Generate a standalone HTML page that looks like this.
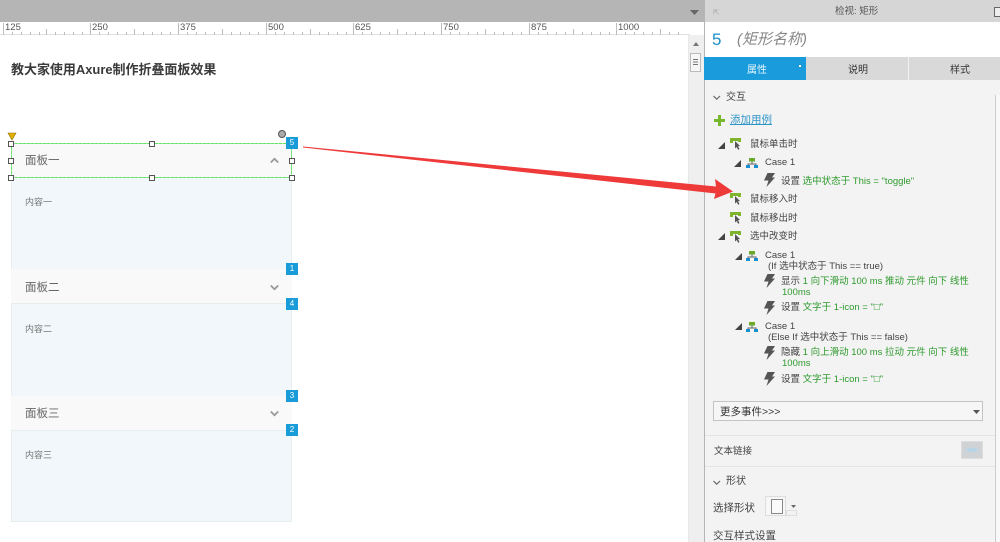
<!DOCTYPE html>
<html lang="zh">
<head>
<meta charset="utf-8">
<style>
html,body{margin:0;padding:0;background:#fff}
#p{position:relative;width:1000px;height:542px;overflow:hidden;background:#fff;font-family:"Liberation Sans","Noto Sans CJK SC",sans-serif;color:#444;filter:blur(.35px)}
#p div{position:absolute}
.t{position:absolute;white-space:nowrap;line-height:14px;font-size:9.5px;color:#444}
.g{color:#2e9a2e}
.b{background:#1a9cd8;color:#fff;width:12px;height:12px;font-size:8px;line-height:12px;text-align:center}
.h{width:4px;height:4px;border:1px solid #555;background:#fff}
.pn{left:11px;width:279px;border:1px solid #e6eeee;background:#f1f7fa}
.hd{left:11px;width:281px;height:35px;background:#f9f9f9;border-bottom:1px solid #e8eef0;box-sizing:border-box}
.sx{height:1px;left:11px;width:281px;background:repeating-linear-gradient(90deg,#66e266 0 3px,#a8eea8 3px 4px)}
.sy{width:1px;top:143px;height:35px;background:repeating-linear-gradient(180deg,#66e266 0 3px,#a8eea8 3px 4px)}
svg{position:absolute;overflow:visible}
</style>
</head>
<body>
<div id="p">
<svg width="0" height="0" style="position:absolute"><defs>
<g id="ev"><path d="M0 0h7v3H3v2H0z" fill="#7fb52c"/><path d="M7 0h4v4H8V3H7z" fill="#7fb52c"/><path d="M5 3l5 5-2 .3 1.500 2.700-1.400.7L6.700 9 5 10.500z" fill="#555"/></g>
<g id="cs"><rect x="3" y="0" width="6" height="3.500" fill="#6aa92a"/><path d="M6 3.500V6M2 9V6h8v3" fill="none" stroke="#666" stroke-width="1"/><rect x="0" y="7" width="4" height="3" fill="#1a8fd0"/><rect x="8" y="7" width="4" height="3" fill="#1a8fd0"/></g>
<g id="ac"><path d="M3.500 0H11L8 4.500h3L2.500 14 4.500 7.500H0z" fill="#555"/></g>
<g id="tr"><path d="M7 0v7H0z" fill="#444"/></g>
</defs></svg>

<!-- top bar + ruler -->
<div style="left:0;top:0;width:704px;height:22px;background:#b5b5b5"></div>
<div style="left:0;top:22px;width:690px;height:13px;background:#fff;border-bottom:1px solid #e2e2e2;box-sizing:border-box"></div>
<svg style="left:0;top:22px" width="690" height="13"><g stroke="#bdbdbd" stroke-width="1">
<path d="M3.500 1v12M90.500 1v12M178.500 1v12M266.500 1v12M353.500 1v12M441.500 1v12M529.500 1v12M616.500 1v12M46.500 7v6M134.500 7v6M222.500 7v6M310.500 7v6M397.500 7v6M485.500 7v6M573.500 7v6M660.500 7v6"/>
<path d="M12.500 10v3M21.500 10v3M30.500 10v3M39.500 10v3M55.500 10v3M64.500 10v3M73.500 10v3M82.500 10v3M99.500 10v3M108.500 10v3M117.500 10v3M126.500 10v3M143.500 10v3M152.500 10v3M161.500 10v3M170.500 10v3M187.500 10v3M196.500 10v3M205.500 10v3M214.500 10v3M231.500 10v3M240.500 10v3M249.500 10v3M258.500 10v3M275.500 10v3M284.500 10v3M293.500 10v3M302.500 10v3M319.500 10v3M328.500 10v3M337.500 10v3M346.500 10v3M362.500 10v3M371.500 10v3M380.500 10v3M389.500 10v3M406.500 10v3M415.500 10v3M424.500 10v3M433.500 10v3M450.500 10v3M459.500 10v3M468.500 10v3M477.500 10v3M494.500 10v3M503.500 10v3M512.500 10v3M521.500 10v3M538.500 10v3M547.500 10v3M556.500 10v3M565.500 10v3M582.500 10v3M591.500 10v3M600.500 10v3M609.500 10v3M625.500 10v3M634.500 10v3M643.500 10v3M652.500 10v3M669.500 10v3M678.500 10v3"/>
</g></svg>
<span class="t" style="left:5px;top:21px;font-size:9.500px;color:#555">125</span>
<span class="t" style="left:92px;top:21px;font-size:9.500px;color:#555">250</span>
<span class="t" style="left:180px;top:21px;font-size:9.500px;color:#555">375</span>
<span class="t" style="left:268px;top:21px;font-size:9.500px;color:#555">500</span>
<span class="t" style="left:355px;top:21px;font-size:9.500px;color:#555">625</span>
<span class="t" style="left:443px;top:21px;font-size:9.500px;color:#555">750</span>
<span class="t" style="left:531px;top:21px;font-size:9.500px;color:#555">875</span>
<span class="t" style="left:618px;top:21px;font-size:9.500px;color:#555">1000</span>
<svg style="left:690px;top:10px" width="10" height="6"><path d="M0 0h9L4.500 5z" fill="#666"/></svg>

<!-- canvas title -->
<span class="t" style="left:11px;top:62px;font-size:13px;line-height:16px;font-weight:bold;color:#3a3a3a;letter-spacing:-.03px">教大家使用Axure制作折叠面板效果</span>

<!-- panels -->
<div class="pn" style="top:143px;height:377px"></div>
<div class="hd" style="top:143px"></div>
<div class="hd" style="top:269px"></div>
<div class="hd" style="top:396px"></div>
<span class="t" style="left:25px;top:154px;font-size:11.500px;color:#666">面板一</span>
<span class="t" style="left:25px;top:281px;font-size:11.500px;color:#666">面板二</span>
<span class="t" style="left:25px;top:407px;font-size:11.500px;color:#666">面板三</span>
<span class="t" style="left:25px;top:195px;font-size:9px;color:#777">内容一</span>
<span class="t" style="left:25px;top:322px;font-size:9px;color:#777">内容二</span>
<span class="t" style="left:25px;top:448px;font-size:9px;color:#777">内容三</span>
<svg style="left:270px;top:157px" width="9" height="7"><path d="M.8 5.500L4.500 1.800 8.200 5.500" fill="none" stroke="#999" stroke-width="1.800"/></svg>
<svg style="left:270px;top:284px" width="9" height="7"><path d="M.8 1.500L4.500 5.200 8.200 1.500" fill="none" stroke="#999" stroke-width="1.800"/></svg>
<svg style="left:270px;top:410px" width="9" height="7"><path d="M.8 1.500L4.500 5.200 8.200 1.500" fill="none" stroke="#999" stroke-width="1.800"/></svg>

<!-- selection -->
<div class="sx" style="top:143px"></div>
<div class="sx" style="top:177px"></div>
<div class="sy" style="left:11px"></div>
<div class="sy" style="left:291px"></div>
<svg style="left:0;top:0" width="310" height="190">
<path d="M8 133h8l-4 7z" fill="#e2b100" stroke="#8a6d00" stroke-width=".6"/>
<circle cx="282" cy="134" r="3.500" fill="#aaa" stroke="#555" stroke-width="1"/>
</svg>
<div class="h" style="left:8px;top:141px"></div>
<div class="h" style="left:149px;top:141px"></div>
<div class="h" style="left:8px;top:158px"></div>
<div class="h" style="left:289px;top:158px"></div>
<div class="h" style="left:8px;top:175px"></div>
<div class="h" style="left:149px;top:175px"></div>
<div class="h" style="left:289px;top:175px"></div>
<div class="b" style="left:286px;top:137px">5</div>
<div class="b" style="left:286px;top:263px">1</div>
<div class="b" style="left:286px;top:298px">4</div>
<div class="b" style="left:286px;top:390px">3</div>
<div class="b" style="left:286px;top:424px">2</div>

<!-- scrollbar strip -->
<div style="left:688px;top:35px;width:16px;height:507px;background:#efefef;border-left:1px solid #e8e8e8;box-sizing:border-box"></div>
<svg style="left:692px;top:41px" width="8" height="6"><path d="M1 5L4 1l3 4z" fill="#777"/></svg>
<div style="left:690px;top:53px;width:11px;height:19px;background:#f6f6f6;border:1px solid #bbb;box-sizing:border-box"></div>
<svg style="left:693px;top:59px" width="6" height="8"><path d="M0 .5h5M0 3h5M0 5.500h5" stroke="#777" stroke-width="1"/></svg>

<!-- right panel -->
<div style="left:704px;top:0;width:296px;height:542px;background:#f3f3f3;border-left:1px solid #b5b5b5;box-sizing:border-box"></div>
<div style="left:705px;top:0;width:295px;height:22px;background:#d6d6d6"></div>
<span class="t" style="left:835px;top:5px;color:#555;font-size:9.500px">检视: 矩形</span>
<span class="t" style="left:713px;top:6px;font-size:8px;color:#aaa">⇱</span>
<div style="left:994px;top:7px;width:6px;height:10px;border:1px solid #666;border-right:0;box-sizing:border-box;background:#eee"></div>
<div style="left:705px;top:22px;width:295px;height:35px;background:#fff"></div>
<span class="t" style="left:712px;top:31px;font-size:17px;line-height:18px;color:#1a8fc8">5</span>
<span class="t" style="left:737px;top:31px;font-size:15px;line-height:18px;color:#888;font-style:italic">(矩形名称)</span>

<!-- tabs -->
<div style="left:704px;top:57px;width:102px;height:23px;background:#1a9cdc"></div>
<div style="left:806px;top:57px;width:102px;height:23px;background:#d9d9d9"></div>
<div style="left:909px;top:57px;width:91px;height:23px;background:#d9d9d9"></div>
<span class="t" style="left:747px;top:64px;color:#e8f6ff;font-size:10px">属性</span>
<span class="t" style="left:848px;top:64px;color:#333;font-size:10px">说明</span>
<span class="t" style="left:950px;top:64px;color:#333;font-size:10px">样式</span>
<div style="left:799px;top:65px;width:2px;height:2px;background:#fff"></div>

<div style="left:995px;top:95px;width:5px;height:447px;background:#f8f8f8;border-left:1px solid #ccc;box-sizing:border-box"></div>

<!-- interactions -->
<svg style="left:713px;top:95px" width="8" height="6"><path d="M.5 1L3.700 4.200 7 1" fill="none" stroke="#666" stroke-width="1.200"/></svg>
<span class="t" style="left:726px;top:91px;font-size:10px">交互</span>
<svg style="left:714px;top:115px" width="11" height="11"><path d="M4 0h3v4h4v3H7v4H4V7H0V4h4z" fill="#76b82a"/></svg>
<span class="t" style="left:730px;top:113px;font-size:10.500px;color:#2f95c8;text-decoration:underline">添加用例</span>

<svg style="left:0;top:0" width="1000" height="400">
<use href="#tr" x="718" y="142"/><use href="#ev" x="730" y="138"/>
<use href="#tr" x="734" y="160"/><use href="#cs" x="746" y="158"/>
<use href="#ac" x="764" y="173"/>
<use href="#ev" x="730" y="193"/>
<use href="#ev" x="730" y="212"/>
<use href="#tr" x="718" y="233"/><use href="#ev" x="730" y="231"/>
<use href="#tr" x="735" y="253"/><use href="#cs" x="746" y="251"/>
<use href="#ac" x="764" y="274"/>
<use href="#ac" x="764" y="301"/>
<use href="#tr" x="735" y="323"/><use href="#cs" x="746" y="322"/>
<use href="#ac" x="764" y="346"/>
<use href="#ac" x="764" y="372"/>
</svg>

<span class="t" style="left:750px;top:138px">鼠标单击时</span>
<span class="t" style="left:765px;top:156px">Case 1</span>
<span class="t" style="left:781px;top:175px">设置 <span class="g">选中状态于 This = "toggle"</span></span>
<span class="t" style="left:750px;top:193px">鼠标移入时</span>
<span class="t" style="left:750px;top:212px">鼠标移出时</span>
<span class="t" style="left:750px;top:230px">选中改变时</span>
<span class="t" style="left:765px;top:249px">Case 1</span>
<span class="t" style="left:768px;top:260px">(If 选中状态于 This == true)</span>
<span class="t" style="left:781px;top:275px">显示 <span class="g">1 向下滑动 100 ms 推动 元件 向下 线性</span></span>
<span class="t g" style="left:782px;top:286px;color:#2e9a2e">100ms</span>
<span class="t" style="left:781px;top:301px">设置 <span class="g">文字于 1-icon = "&#9633;"</span></span>
<span class="t" style="left:765px;top:320px">Case 1</span>
<span class="t" style="left:768px;top:331px">(Else If 选中状态于 This == false)</span>
<span class="t" style="left:781px;top:346px">隐藏 <span class="g">1 向上滑动 100 ms 拉动 元件 向下 线性</span></span>
<span class="t g" style="left:782px;top:357px;color:#2e9a2e">100ms</span>
<span class="t" style="left:781px;top:373px">设置 <span class="g">文字于 1-icon = "&#9633;"</span></span>

<!-- more events -->
<div style="left:713px;top:401px;width:270px;height:20px;background:#f6f6f6;border:1px solid #c4c4c4;box-sizing:border-box"></div>
<span class="t" style="left:720px;top:405px;font-size:10.500px;color:#333">更多事件&gt;&gt;&gt;</span>
<svg style="left:973px;top:410px" width="7" height="5"><path d="M0 0h7L3.500 4z" fill="#555"/></svg>

<div style="left:705px;top:435px;width:290px;height:1px;background:#e4e4e4"></div>
<span class="t" style="left:714px;top:445px">文本链接</span>
<div style="left:961px;top:441px;width:22px;height:18px;background:#cfd3d6;border:1px solid #ddd;box-sizing:border-box"></div>
<div style="left:967px;top:448px;width:10px;height:4px;background:#b9d4e6"></div>
<div style="left:705px;top:466px;width:290px;height:1px;background:#e4e4e4"></div>

<svg style="left:713px;top:480px" width="8" height="6"><path d="M.5 1L3.700 4.200 7 1" fill="none" stroke="#666" stroke-width="1.200"/></svg>
<span class="t" style="left:726px;top:475px;font-size:10px">形状</span>
<span class="t" style="left:713px;top:501px;font-size:10.500px">选择形状</span>
<svg style="left:765px;top:496px" width="40" height="22"><rect x=".5" y=".5" width="20" height="19" fill="#f7f7f7" stroke="#ddd"/><rect x="6.500" y="3.500" width="11" height="14" fill="#fafafa" stroke="#888"/><rect x="21.500" y="14.500" width="10" height="5" fill="#f3f3f3" stroke="#ddd"/><path d="M26 9h5l-2.500 3z" fill="#666"/></svg>
<span class="t" style="left:713px;top:529px;font-size:10.500px">交互样式设置</span>

<!-- red arrow -->
<svg style="left:0;top:0" width="1000" height="542">
<path d="M303 146.500L716 186.500 715 179 733 191.500 714 199 715.500 193.500 303 147.500z" fill="#ef3a3a"/>
</svg>
</div>
</body>
</html>
